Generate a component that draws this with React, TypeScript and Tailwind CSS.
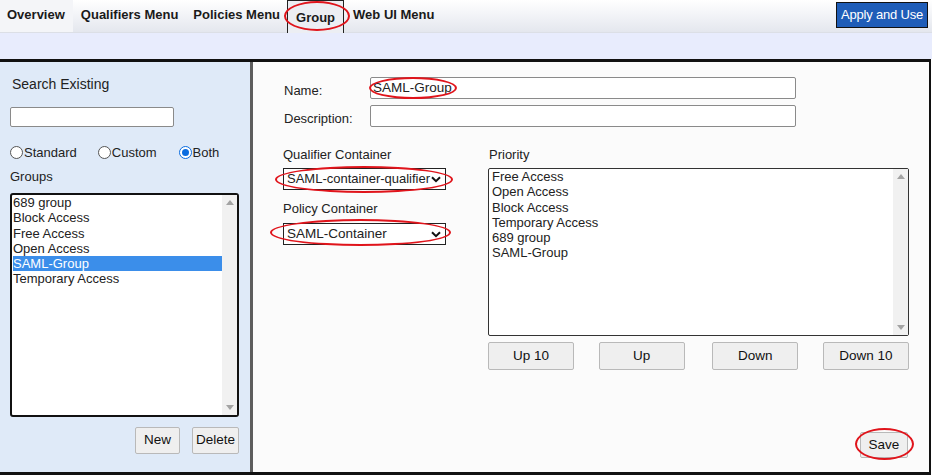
import React from "react";

const Ellipse = ({ cls }: { cls: string }) => (
  <div className={`pointer-events-none absolute rounded-[50%] border-2 border-[#e0141b] ${cls}`} />
);

const Chevron = () => (
  <svg width="10" height="7" viewBox="0 0 10 7" className="shrink-0">
    <path d="M1 1.2 L5 5.2 L9 1.2" fill="none" stroke="#111" strokeWidth="2" />
  </svg>
);

const ScrollBar = () => (
  <div className="flex w-[15px] shrink-0 flex-col items-center justify-between bg-[#f1f1f1] py-[5px]">
    <svg width="8" height="5" viewBox="0 0 8 5"><path d="M0 5 L4 0 L8 5 Z" fill="#a3a3a3" /></svg>
    <svg width="8" height="5" viewBox="0 0 8 5"><path d="M0 0 L4 5 L8 0 Z" fill="#a3a3a3" /></svg>
  </div>
);

const Btn = ({ children, cls = "" }: { children: React.ReactNode; cls?: string }) => (
  <div className={`flex items-center justify-center rounded-[2px] border border-[#b9b9b9] bg-[#efefef] text-[13.5px] text-[#111] ${cls}`}>
    {children}
  </div>
);

const Radio = ({ checked }: { checked?: boolean }) => (
  <span
    className={`mr-[1px] inline-flex h-[13px] w-[13px] items-center justify-center rounded-full border ${
      checked ? "border-[#0a6ce0]" : "border-[#555]"
    } bg-white`}
  >
    {checked && <span className="h-[7px] w-[7px] rounded-full bg-[#0a6ce0]" />}
  </span>
);

export default function App() {
  const groups = ["689 group", "Block Access", "Free Access", "Open Access", "SAML-Group", "Temporary Access"];
  const priority = ["Free Access", "Open Access", "Block Access", "Temporary Access", "689 group", "SAML-Group"];
  return (
    <div
      className="relative h-[475px] w-[932px] overflow-hidden bg-white text-[#222]"
      style={{ fontFamily: '"Liberation Sans", Arial, sans-serif' }}
    >
      {/* Top nav */}
      <div className="flex h-[33px] items-start border-b border-[#dcdfe6] bg-gradient-to-b from-[#ffffff] to-[#e4e7ee]">
        <div className="flex h-[32px] items-start bg-[#f4f5f8] pl-[7px] pr-[8px] pt-[5px] text-[13px] font-bold text-[#1a1a1a]">Overview</div>
        <div className="flex h-[32px] items-start px-[8px] pt-[5px] text-[13px] font-bold text-[#1a1a1a]">Qualifiers Menu</div>
        <div className="flex h-[32px] items-start px-[7px] pt-[5px] text-[13px] font-bold text-[#1a1a1a]">Policies Menu</div>
        <div className="flex h-[33px] items-start border border-b-0 border-[#222] bg-[#eceef3] px-[8px] pt-[7px] text-[13px] font-bold text-[#1a1a1a]">Group</div>
        <div className="flex h-[32px] items-start px-[9px] pt-[5px] text-[13px] font-bold text-[#1a1a1a]">Web UI Menu</div>
        <div className="flex-1" />
        <div className="mr-[4px] mt-[2px] flex h-[26px] items-center border border-[#111] bg-[#1f5db8] px-[4px] text-[13px] tracking-[-0.2px] text-white">
          Apply and Use
        </div>
      </div>
      <div className="h-[26px] bg-[#e8ecfd]" />

      {/* Main */}
      <div className="flex h-[416px] w-[931px] border-y-[3px] border-r-[2px] border-[#111]">
        {/* Left panel */}
        <div className="flex w-[253px] shrink-0 flex-col border-r-[3px] border-[#5d5d5d] bg-[#dfeaf8] pl-[10px] pr-[10px]">
          <div className="ml-[2px] mt-[12px] text-[14px] text-[#222]">Search Existing</div>
          <div className="mt-[12px] h-[20px] w-[164px] rounded-[2px] border border-[#8a8a8a] bg-white" />
          <div className="mt-[16px] flex items-center text-[13px]">
            <Radio />
            <span>Standard</span>
            <span className="ml-[21px]" />
            <Radio />
            <span>Custom</span>
            <span className="ml-[22px]" />
            <Radio checked />
            <span>Both</span>
          </div>
          <div className="mt-[4px] text-[13px]">Groups</div>
          <div className="mt-[7px] flex h-[224px] w-[229px] rounded-[3px] border-2 border-[#111] bg-white">
            <div className="flex-1 pl-[1px] text-[13px] leading-[15.3px] text-[#222]">
              {groups.map((g) =>
                g === "SAML-Group" ? (
                  <div key={g} className="bg-[#3b8eea] text-white">{g}</div>
                ) : (
                  <div key={g}>{g}</div>
                )
              )}
            </div>
            <ScrollBar />
          </div>
          <div className="mt-[10px] flex justify-end gap-[12px] pr-[1px]">
            <Btn cls="h-[27px] w-[45px]">New</Btn>
            <Btn cls="h-[27px] w-[47px]">Delete</Btn>
          </div>
        </div>

        {/* Right panel */}
        <div className="flex flex-1 flex-col bg-[#fbfbfb] pl-[30px] pr-[20px] text-[13px]">
          <div className="mt-[15px] flex h-[22px] items-center">
            <div className="relative top-[3px] w-[87px] pl-[1px]">Name:</div>
            <div className="flex h-[22px] w-[426px] items-center rounded-[2px] border border-[#8a8a8a] bg-white pl-[2px] text-[13.5px]">
              SAML-Group
            </div>
          </div>
          <div className="mt-[6px] flex h-[22px] items-center">
            <div className="relative top-[3px] w-[87px] pl-[1px]">Description:</div>
            <div className="h-[22px] w-[426px] rounded-[2px] border border-[#8a8a8a] bg-white" />
          </div>
          <div className="mt-[20px] flex">
            <div className="w-[205px] shrink-0">
              <div className="leading-[15px]">Qualifier Container</div>
              <div className="mt-[6px] flex h-[22px] w-[163px] items-center justify-between overflow-hidden whitespace-nowrap border border-[#222] bg-white pl-[3px] pr-[4px] text-[13px]">
                <span>SAML-container-qualifier</span>
                <Chevron />
              </div>
              <div className="mt-[11px] leading-[15px]">Policy Container</div>
              <div className="mt-[7px] flex h-[22px] w-[163px] items-center justify-between whitespace-nowrap border border-[#222] bg-white pl-[3px] pr-[4px] text-[13.5px]">
                <span>SAML-Container</span>
                <Chevron />
              </div>
            </div>
            <div className="flex w-[421px] flex-col">
              <div className="pl-[1px] leading-[15px]">Priority</div>
              <div className="mt-[6px] flex h-[168px] rounded-[2px] border border-[#333] bg-white">
                <div className="flex-1 pl-[3px] pt-[0px] text-[13px] leading-[15.3px] text-[#222]">
                  {priority.map((p) => (
                    <div key={p}>{p}</div>
                  ))}
                </div>
                <ScrollBar />
              </div>
              <div className="mt-[6px] flex justify-between">
                <Btn cls="h-[28px] w-[86px]">Up 10</Btn>
                <Btn cls="h-[28px] w-[86px]">Up</Btn>
                <Btn cls="h-[28px] w-[86px] ml-[3px]">Down</Btn>
                <Btn cls="h-[28px] w-[86px]">Down 10</Btn>
              </div>
            </div>
          </div>
          <div className="flex-1" />
          <div className="mb-[14px] flex justify-end">
            <Btn cls="h-[26px] w-[48px] mr-[1px]">Save</Btn>
          </div>
        </div>
      </div>

      {/* Annotation ellipses */}
      <Ellipse cls="left-[284px] top-[1px] h-[30px] w-[66px]" />
      <Ellipse cls="left-[369px] top-[77px] h-[22px] w-[88px]" />
      <Ellipse cls="left-[275px] top-[166px] h-[27px] w-[178px]" />
      <Ellipse cls="left-[270px] top-[219px] h-[27px] w-[181px]" />
      <Ellipse cls="left-[855px] top-[428px] h-[32px] w-[59px]" />
    </div>
  );
}
